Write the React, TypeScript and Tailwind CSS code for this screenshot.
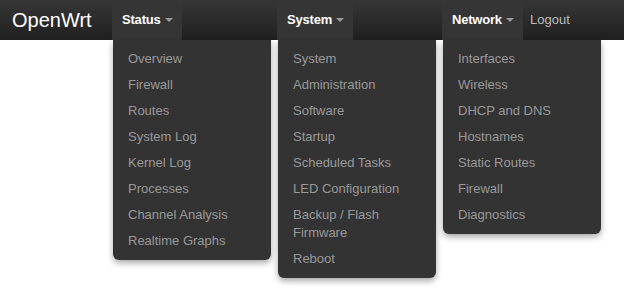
import React from "react";

interface NavMenu {
  title: string;
  items: string[];
}

const menus: NavMenu[] = [
  {
    title: "Status",
    items: [
      "Overview",
      "Firewall",
      "Routes",
      "System Log",
      "Kernel Log",
      "Processes",
      "Channel Analysis",
      "Realtime Graphs",
    ],
  },
  {
    title: "System",
    items: [
      "System",
      "Administration",
      "Software",
      "Startup",
      "Scheduled Tasks",
      "LED Configuration",
      "Backup / Flash Firmware",
      "Reboot",
    ],
  },
  {
    title: "Network",
    items: [
      "Interfaces",
      "Wireless",
      "DHCP and DNS",
      "Hostnames",
      "Static Routes",
      "Firewall",
      "Diagnostics",
    ],
  },
];

function Caret() {
  return (
    <span className="ml-[4px] inline-block w-0 h-0 border-x-[4px] border-x-transparent border-t-[4px] border-t-[#999] align-middle mt-[-1px]" />
  );
}

function Dropdown(props: NavMenu) {
  return (
    <li className="relative w-[165px] shrink-0">
      <a className="inline-flex items-center h-[40px] pl-[10px] pr-[9px] bg-[#353535] text-white font-bold text-[13px] tracking-[-0.2px]">
        {props.title}
        <Caret />
      </a>
      <ul className="absolute top-full left-px w-[158px] bg-[#333] rounded-b-[6px] pt-[6px] pb-[6px] shadow-[0_3px_6px_rgba(0,0,0,0.35)] z-10">
        {props.items.map((item) => (
          <li key={item}>
            <a className="block px-[15px] py-[4px] leading-[18px] text-[13px] text-[#999]">
              {item}
            </a>
          </li>
        ))}
      </ul>
    </li>
  );
}

export default function App() {
  return (
    <div
      className="w-[624px] h-[289px] bg-white overflow-hidden"
      style={{ fontFamily: '"Liberation Sans", Arial, sans-serif' }}
    >
      <header className="h-[40px] bg-gradient-to-b from-[#363636] to-[#202020] flex items-center">
        <a className="ml-[12px] w-[100px] text-[20px] text-white leading-[40px]">
          OpenWrt
        </a>
        <ul className="flex items-start h-[40px]">
          {menus.map((m) => (
            <Dropdown key={m.title} title={m.title} items={m.items} />
          ))}
          <li>
            <a className="flex items-center h-[40px] px-[9px] -ml-[86px] text-[13px] text-[#bbb]">
              Logout
            </a>
          </li>
        </ul>
      </header>
    </div>
  );
}
